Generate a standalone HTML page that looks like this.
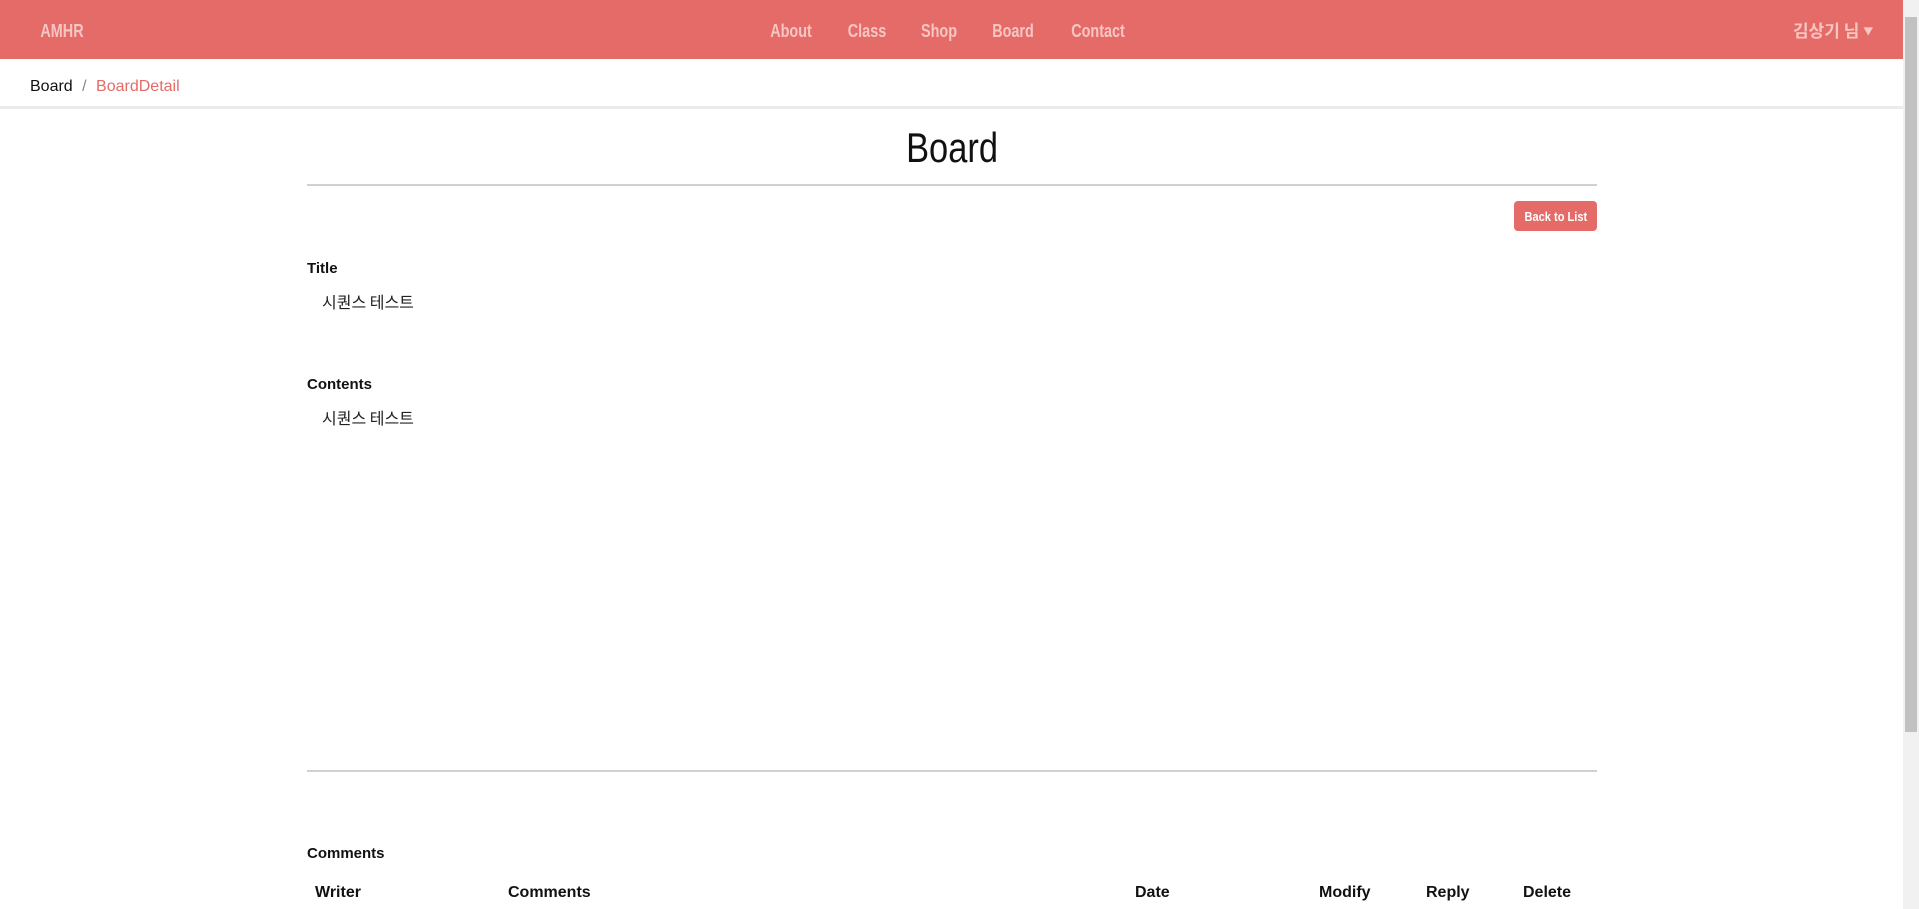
<!DOCTYPE html>
<html><head><meta charset="utf-8"><style>
body{margin:0;width:1919px;height:909px;overflow:hidden;background:#fff;font-family:"Liberation Sans","Noto Sans CJK KR",sans-serif;position:relative}
.a{position:absolute;white-space:nowrap}
.nav{position:absolute;left:0;top:0;width:1903px;height:59px;background:#e46b67}
.n{position:absolute;top:21px;white-space:nowrap;font-weight:bold;font-size:18px;color:#f7c6c3;transform:translateX(-50%) scaleX(0.8)}
.sb{position:absolute;right:0;top:0;width:16px;height:909px;background:#f1f1f1}
.sb div{position:absolute;left:2px;top:17px;width:12px;height:715px;background:#c1c1c1}
.lbl{font-weight:bold;font-size:15px;color:#111}
.hr{position:absolute;left:307px;width:1290px;height:2px;background:#d0d0d0}
.th{position:absolute;top:884px;font-weight:bold;font-size:16px;color:#111}
</style></head><body>
<div class="nav">
<div class="n" style="left:62px">AMHR</div>
<div class="n" style="left:791px">About</div>
<div class="n" style="left:867px">Class</div>
<div class="n" style="left:939px">Shop</div>
<div class="n" style="left:1013px">Board</div>
<div class="n" style="left:1098px">Contact</div>
<div class="a" style="left:1793px;top:17px;font-family:'Noto Sans CJK KR',sans-serif;font-weight:bold;font-size:17px;color:#f7c6c3">김상기 님 <span style="font-size:10px;vertical-align:2px">▼</span></div>
</div>
<div class="a" style="left:30px;top:78px;font-size:16px;color:#111">Board <span style="color:#888;margin:0 5px">/</span> <span style="color:#e46b67">BoardDetail</span></div>
<div class="a" style="left:0;top:106px;width:1903px;height:3px;background:#ebebeb"></div>
<div class="a" style="left:307px;width:1290px;top:124px;text-align:center;font-size:42px;color:#111"><span style="display:inline-block;transform:scaleX(0.82)">Board</span></div>
<div class="hr" style="top:184px"></div>
<div class="a" style="left:1514px;top:201px;width:83px;height:30px;background:#e46b67;border-radius:4px;color:#fff;font-weight:bold;font-size:13px;line-height:32px;text-align:center"><span style="display:inline-block;transform:scaleX(0.85)">Back to List</span></div>
<div class="a lbl" style="left:307px;top:260px">Title</div>
<div class="a" style="left:322px;top:289px;font-size:16px;color:#222;font-family:'Noto Sans CJK KR',sans-serif">시퀀스 테스트</div>
<div class="a lbl" style="left:307px;top:376px">Contents</div>
<div class="a" style="left:322px;top:405px;font-size:16px;color:#222;font-family:'Noto Sans CJK KR',sans-serif">시퀀스 테스트</div>
<div class="hr" style="top:770px"></div>
<div class="a lbl" style="left:307px;top:845px">Comments</div>
<div class="th" style="left:315px">Writer</div>
<div class="th" style="left:508px">Comments</div>
<div class="th" style="left:1135px">Date</div>
<div class="th" style="left:1319px">Modify</div>
<div class="th" style="left:1426px">Reply</div>
<div class="th" style="left:1523px">Delete</div>
<div class="sb"><div></div></div>
</body></html>
